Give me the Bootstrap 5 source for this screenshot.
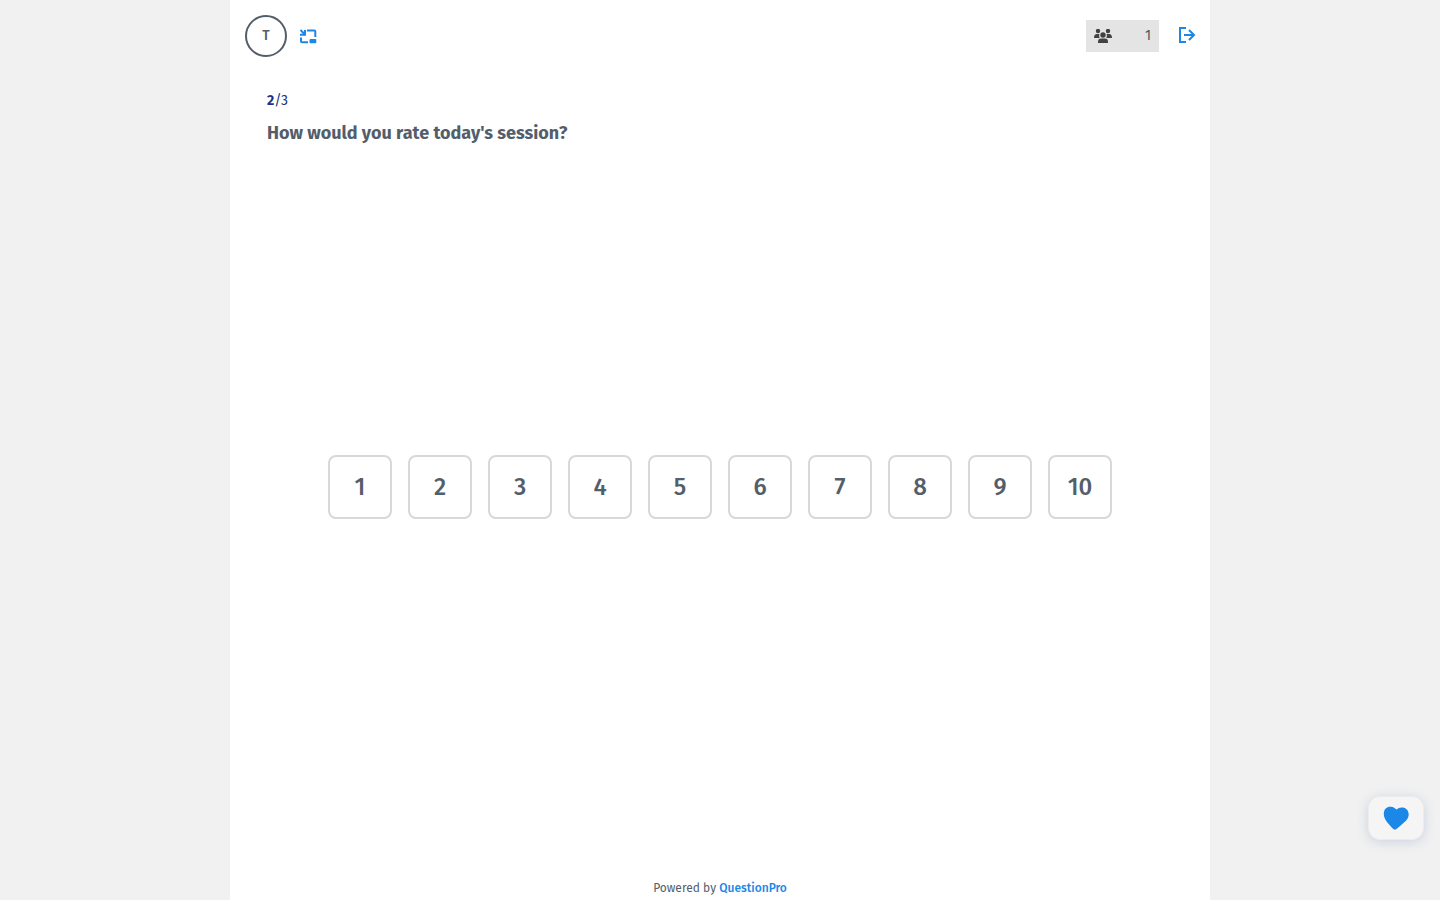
<!DOCTYPE html>
<html lang="en">
<head>
<meta charset="utf-8">
<meta name="viewport" content="width=device-width, initial-scale=1">
<title>Live poll</title>
<link href="https://cdn.jsdelivr.net/npm/bootstrap@5.3.0/dist/css/bootstrap.min.css" rel="stylesheet">
<style>
  body { background: #f1f1f1; color: #545e6b; font-family: "Fira Sans", Roboto, sans-serif; font-size: 14px; line-height: 20px; }
  .poll { max-width: 980px; }
  .topbar { height: 72px; padding: 0 14px 0 15px; }
  .avatar { width: 42px; height: 42px; border: 2px solid #545e6b; font-size: 14px; line-height: 20px; font-weight: 500; }
  .icon-btn { color: #1b87e6; line-height: 0; }
  .attendees { width: 73px; height: 32px; padding: 0 8px; background: #e4e4e4; color: #545454; }
  .question { padding: 20px 37px 0; }
  .progress-count { color: #1b3380; line-height: 18px; }
  .question-title { font-size: 18px; line-height: 22px; font-weight: 700; }
  .ratings { padding: 0 37px 50px; }
  .rating { width: 64px; height: 64px; border: 2px solid #d8d8d8; border-radius: 8px; color: #545e6b; font-size: 24px; font-weight: 500; }
  .powered { font-size: 12px; line-height: 16px; padding-bottom: 4px; }
  .powered a { color: #1b87e6; font-weight: 500; }
  .reaction { right: 16px; bottom: 60px; width: 56px; height: 44px; border: 1px solid #ebebeb; border-radius: 12px; background: #f5f5f5; box-shadow: 0 2px 12px rgba(27, 80, 150, .18); }
</style>
</head>
<body>
<main class="poll bg-white min-vh-100 mx-auto d-flex flex-column">
  <header class="topbar d-flex align-items-center justify-content-between">
    <div class="d-flex align-items-center gap-2">
      <button type="button" class="avatar btn rounded-circle bg-white p-0 text-reset" aria-label="Account T"><span>T</span></button>
      <button type="button" class="icon-btn btn border-0 p-1" aria-label="Minimize window">
        <svg width="18" height="16" viewBox="0 0 18 16" fill="none" stroke="currentColor" stroke-width="2"><path d="M1.500 2l4 4M6 2v4.800H1"/><path d="M8 2.500h7.300q1 0 1 1V9M2 9.500v3.700q0 1 1 1h6"/><rect x="10.500" y="11" width="6.800" height="4.200" rx="1" fill="currentColor" stroke="none"/></svg>
      </button>
    </div>
    <div class="d-flex align-items-center gap-3">
      <div class="attendees d-flex align-items-center justify-content-between" aria-label="Attendees">
        <svg width="18" height="14" viewBox="0 0 18 14" fill="#424242"><circle cx="4" cy="2" r="2.200"/><circle cx="14" cy="2" r="2.200"/><path d="M0 9Q0 5 3 5h2.400A4.500 4.500 0 0 0 5.700 9zM18 9Q18 5 15 5h-2.400a4.500 4.500 0 0 1-.3 4z"/><circle cx="9" cy="6" r="2.700"/><path d="M4 14v-1q0-3.400 3-3.400h4q3 0 3 3.400v1z"/></svg>
        <span>1</span>
      </div>
      <button type="button" class="icon-btn btn border-0 p-0 ps-1" aria-label="Leave session">
        <svg width="17" height="18" viewBox="0 0 17 18" fill="none" stroke="currentColor" stroke-width="2"><path d="M7 1H1v14h6M5 8h10M10 3l5 5-5 5"/></svg>
      </button>
    </div>
  </header>
  <section class="question">
    <div class="progress-count"><strong>2</strong>/3</div>
    <h1 class="question-title mt-2 pt-1 mb-0">How would you rate today's session?</h1>
  </section>
  <section class="ratings flex-grow-1 d-flex flex-wrap align-items-center align-content-center justify-content-center gap-3" aria-label="Rating">
    <button type="button" class="rating btn bg-white p-0">1</button>
    <button type="button" class="rating btn bg-white p-0">2</button>
    <button type="button" class="rating btn bg-white p-0">3</button>
    <button type="button" class="rating btn bg-white p-0">4</button>
    <button type="button" class="rating btn bg-white p-0">5</button>
    <button type="button" class="rating btn bg-white p-0">6</button>
    <button type="button" class="rating btn bg-white p-0">7</button>
    <button type="button" class="rating btn bg-white p-0">8</button>
    <button type="button" class="rating btn bg-white p-0">9</button>
    <button type="button" class="rating btn bg-white p-0">10</button>
  </section>
  <footer class="powered text-center">Powered by <a href="#" class="text-decoration-none">QuestionPro</a></footer>
</main>
<button type="button" class="reaction btn position-fixed d-flex align-items-center justify-content-center p-0" aria-label="Send a heart">
  <svg width="26" height="24" viewBox="0 0 26 24" fill="#1b87e6"><path d="M.8 7.500C1 2.500 4.300.4 7.800.7c2.600.2 4.400 1.500 5.800 2.900C15.300 2 17.300 1.300 19.800 1.600c4 .5 6.300 4 5.800 7.900-.5 4-3.800 6.500-6.800 9-2 1.700-4 3.300-5.300 4.500-1 .7-2.200.8-3.200 0C8.700 21.600 6.600 19.300 4.600 16.800 2.300 14 .7 11 .8 7.500z"/></svg>
</button>
<script src="https://cdn.jsdelivr.net/npm/bootstrap@5.3.0/dist/js/bootstrap.bundle.min.js"></script>
</body>
</html>
